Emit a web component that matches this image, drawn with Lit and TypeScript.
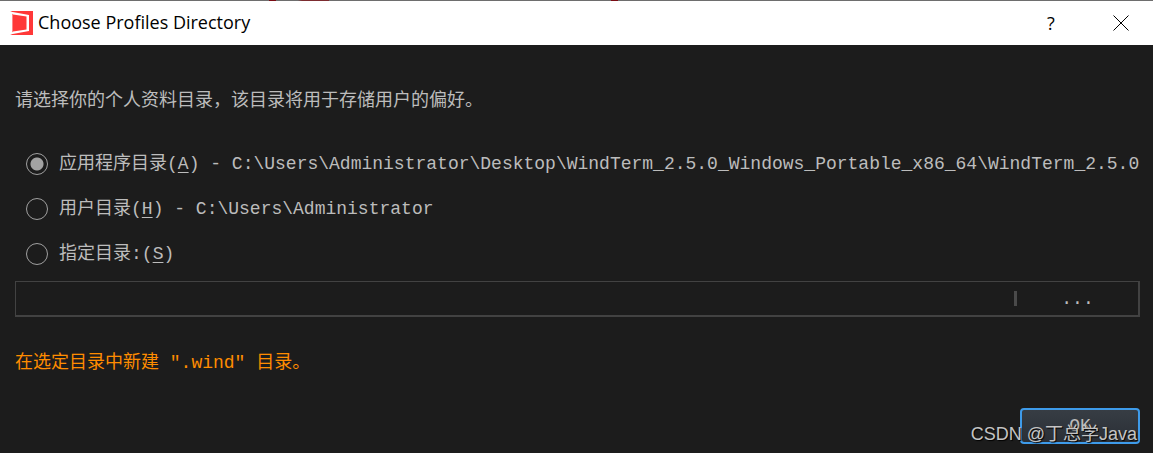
import { LitElement, html, css } from "lit";
import { customElement, state } from "lit/decorators.js";

interface Choice {
  id: string;
  label: string;
  key: string;
  path: string;
}

const CHOICES: Choice[] = [
  {
    id: "app",
    label: "应用程序目录",
    key: "A",
    path: " - C:\\Users\\Administrator\\Desktop\\WindTerm_2.5.0_Windows_Portable_x86_64\\WindTerm_2.5.0",
  },
  { id: "home", label: "用户目录", key: "H", path: " - C:\\Users\\Administrator" },
  { id: "custom", label: "指定目录:", key: "S", path: "" },
];

@customElement("app-root")
export class AppRoot extends LitElement {
  static styles = css`
    :host {
      display: flex;
      flex-direction: column;
      position: relative;
      min-height: 100vh;
      box-sizing: border-box;
      background: #1c1c1c;
      color: #bcbcbc;
      font: 18px/26px "Liberation Mono", "Noto Sans CJK SC", monospace;
      overflow: hidden;
    }
    .edge {
      height: 1px;
      background: linear-gradient(
        90deg,
        #6e6e6e 269px,
        #7a0c14 269px 276px,
        #6e6e6e 276px 298px,
        #7c2c30 302px 329px,
        #6e6e6e 329px 611px,
        #7a0c14 611px 618px,
        #6e6e6e 618px
      );
    }
    .titlebar {
      display: flex;
      align-items: center;
      height: 44px;
      padding-left: 10px;
      background: #fff;
      color: #000;
      font-family: "Open Sans", "Noto Sans", sans-serif;
    }
    .logo {
      width: 24px;
      height: 24px;
      margin-right: 4px;
    }
    .title {
      flex: 1;
      margin: 0;
      padding-bottom: 2px;
      font-size: 18px;
      font-weight: 400;
    }
    .caption {
      display: grid;
      place-items: center;
      width: 76px;
      height: 44px;
      padding: 0;
      border: 0;
      background: none;
      color: #000;
      font: 18px/26px "Open Sans", "Noto Sans", sans-serif;
    }
    .close {
      width: 64px;
    }
    .body {
      display: flex;
      flex-direction: column;
      padding: 43px 13px 9px 15px;
    }
    .prompt,
    .hint {
      margin: 0;
    }
    .choices {
      margin: 27px 0 5px;
      padding: 0;
      border: 0;
      min-width: 0;
    }
    .choice {
      display: flex;
      align-items: center;
      height: 45px;
      padding-left: 11px;
      white-space: pre;
    }
    .radio {
      appearance: none;
      flex: none;
      width: 22px;
      height: 22px;
      margin: 0 11px 0 0;
      border: 1px solid #a0a0a0;
      border-radius: 50%;
    }
    .radio:checked {
      background: radial-gradient(circle, #a3a3a3 6px, transparent 7px);
    }
    .key {
      text-decoration: underline;
      text-underline-offset: 3px;
      text-decoration-thickness: 1px;
    }
    .field {
      display: flex;
      align-items: center;
      height: 36px;
      box-sizing: border-box;
      border: 1px solid #424242;
      border-right-width: 2px;
      border-bottom-width: 2px;
    }
    .path {
      flex: 1;
      min-width: 0;
      height: 100%;
      box-sizing: border-box;
      padding: 0 8px;
      border: 0;
      outline: 0;
      background: none;
      color: inherit;
      font: inherit;
    }
    .divider {
      width: 3px;
      height: 15px;
      background: #4a4a4a;
    }
    .browse {
      width: 121px;
      height: 100%;
      padding: 0;
      border: 0;
      background: none;
      color: inherit;
      font: inherit;
    }
    .hint {
      margin-top: 33px;
      color: #ff8c00;
    }
    .actions {
      display: flex;
      justify-content: flex-end;
      margin-top: 32px;
    }
    .ok {
      width: 120px;
      height: 36px;
      padding: 0;
      border: 2px solid #3e9bea;
      border-radius: 4px;
      background: linear-gradient(#373d44, #2a2f36);
      color: #bcbcbc;
      font: inherit;
    }
    .watermark {
      position: absolute;
      right: 16px;
      bottom: 6px;
      color: #c4c4c4;
      font: 18px/26px "Liberation Sans", "Noto Sans CJK SC", sans-serif;
      text-shadow: 1px 1px 1px #000;
      pointer-events: none;
    }
  `;

  @state() private selected = "app";

  private renderChoice(c: Choice) {
    return html`<label class="choice"
      ><input
        class="radio"
        type="radio"
        name="directory"
        .checked=${this.selected === c.id}
        @change=${() => (this.selected = c.id)}
      /><span>${c.label}(<span class="key">${c.key}</span>)${c.path}</span></label
    >`;
  }

  render() {
    return html`
      <div class="edge"></div>
      <header class="titlebar">
        <svg class="logo" viewBox="0 0 24 24" aria-hidden="true">
          <path d="M0 0H23V24H0L2 23V1Z" fill="#ff3838" />
          <path d="M0 0.5L19 4V20L0 23.5V22L2.6 21V3L0 2Z" fill="#fff" />
          <path d="M3 3.5L16.500 5.500V18.500L3 20.500Z" fill="#ff3838" />
        </svg>
        <h1 class="title">Choose Profiles Directory</h1>
        <button class="caption" type="button" aria-label="Help">?</button>
        <button class="caption close" type="button" aria-label="Close">
          <svg width="16" height="16" viewBox="0 0 16 16" aria-hidden="true">
            <path d="M0.500 0.500L15.500 15.500M15.500 0.500L0.500 15.500" stroke="#000" fill="none" />
          </svg>
        </button>
      </header>
      <main class="body">
        <p class="prompt">请选择你的个人资料目录，该目录将用于存储用户的偏好。</p>
        <fieldset class="choices" aria-label="个人资料目录">
          ${CHOICES.map((c) => this.renderChoice(c))}
        </fieldset>
        <div class="field">
          <input class="path" type="text" aria-label="指定目录" />
          <span class="divider"></span>
          <button class="browse" type="button">...</button>
        </div>
        <p class="hint">在选定目录中新建 ".wind" 目录。</p>
        <div class="actions"><button class="ok" type="button">OK</button></div>
      </main>
      <div class="watermark">CSDN @丁总学Java</div>
    `;
  }
}
